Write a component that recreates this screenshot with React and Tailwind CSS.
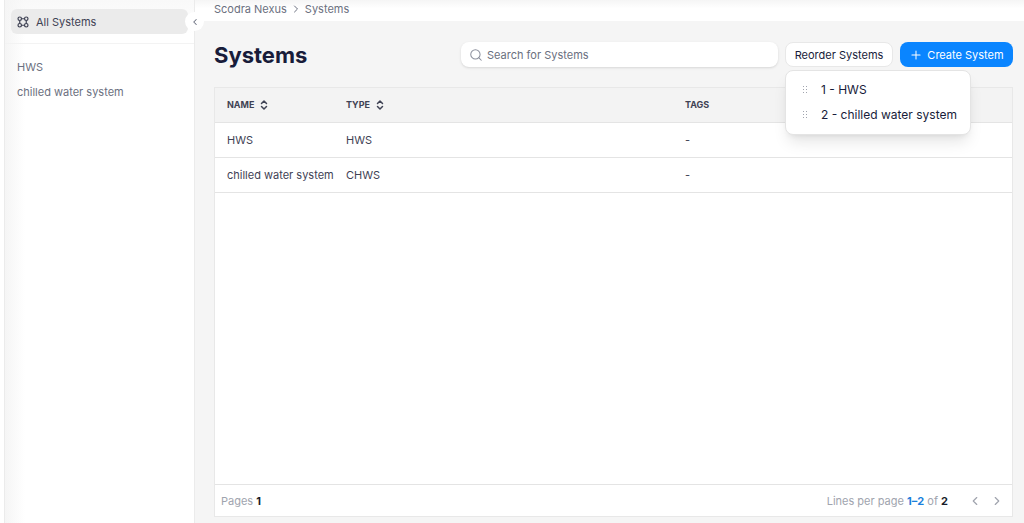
import { ChevronLeft, ChevronRight, ChevronsUpDown, Plus, Search } from "lucide-react";

const systems = [
  { name: "HWS", type: "HWS", tags: "-" },
  { name: "chilled water system", type: "CHWS", tags: "-" },
];

export default function App() {
  return (
    <div className="flex min-h-screen bg-white pl-1 font-['Inter',sans-serif] text-[11px] leading-4 text-[#3f4254]">
      <Sidebar />
      <main className="flex min-w-0 flex-1 flex-col bg-[#f5f5f5]">
        <Breadcrumb />
        <div className="flex flex-1 flex-col pt-[21px] pr-[11px] pb-1.5 pl-[19px]">
          <Toolbar />
          <SystemsTable />
        </div>
      </main>
    </div>
  );
}

function Sidebar() {
  return (
    <aside className="relative w-[191px] shrink-0 border-x border-[#ebebeb] bg-white">
      <div className="absolute inset-y-0 left-0 w-5 bg-gradient-to-r from-[#f5f5f5] to-white" />
      <div className="relative bg-gradient-to-b from-[#f5f5f5]/60 to-transparent pt-[9px] pr-[6px] pl-[6px]">
        <a
          href="#all"
          className="flex h-[25px] items-center gap-[7px] rounded-md bg-[#ebebeb] px-1.5 text-[#3f4254]"
        >
          <SystemsIcon />
          All Systems
        </a>
      </div>
      <nav className="relative mt-[9px] flex flex-col gap-[9px] border-t border-[#f3f3f3] px-3 pt-[15px] text-[#6b7080]">
        {systems.map((s) => (
          <a key={s.name} href="#system">
            {s.name}
          </a>
        ))}
      </nav>
      <button
        aria-label="Collapse sidebar"
        className="absolute top-3 -right-[10px] flex size-[19px] items-center justify-center rounded-full bg-white text-[#6b7080]"
      >
        <ChevronLeft className="size-2.5" strokeWidth={2.5} />
      </button>
    </aside>
  );
}

function SystemsIcon() {
  return (
    <svg
      className="size-3"
      viewBox="0 0 24 24"
      fill="none"
      stroke="currentColor"
      strokeWidth="2.4"
    >
      <circle cx="5.5" cy="5.5" r="3.5" />
      <circle cx="18.5" cy="5.5" r="3.5" />
      <circle cx="5.5" cy="18.5" r="3.5" />
      <circle cx="18.5" cy="18.5" r="3.5" />
      <path d="M9 5.5h6M5.5 9v6M18.5 9v6M9 18.5h6" />
    </svg>
  );
}

function Breadcrumb() {
  return (
    <nav
      aria-label="Breadcrumb"
      className="flex h-[21px] items-center gap-[3px] bg-white bg-gradient-to-b from-[#f5f5f5] to-white to-40% pb-[3px] pl-[19px] text-[#6b7080]"
    >
      <a href="#nexus">Scodra Nexus</a>
      <ChevronRight className="size-3" />
      <a href="#systems">Systems</a>
    </nav>
  );
}

function Toolbar() {
  return (
    <div className="flex h-[25px] items-center gap-[7px]">
      <h1 className="flex-1 text-[22px] leading-6 font-bold text-[#181c3a]">Systems</h1>
      <label className="flex h-[25px] w-[317px] items-center gap-1 rounded-lg bg-white px-2 shadow-sm">
        <Search className="size-[14px] shrink-0 text-[#8b8f9c]" strokeWidth={1.75} />
        <input
          type="search"
          aria-label="Search for Systems"
          placeholder="Search for Systems"
          className="min-w-0 flex-1 outline-none placeholder:text-[#6b7080]"
        />
      </label>
      <div className="relative">
        <button className="block h-[25px] w-[108px] rounded-lg border border-[#e8e8e8] bg-white whitespace-nowrap text-[#181c3a]">
          Reorder Systems
        </button>
        <ul className="absolute top-full left-0 mt-[3px] flex w-[186px] flex-col gap-[5px] rounded-lg border border-[#e4e4e4] bg-white px-[15px] py-[9px] text-[12px] leading-5 whitespace-nowrap text-[#181c3a] shadow-lg">
          {systems.map((s, i) => (
            <li key={s.name} className="flex items-center gap-3">
              <DragHandle />
              {i + 1} - {s.name}
            </li>
          ))}
        </ul>
      </div>
      <button className="flex h-[25px] w-[113px] items-center justify-center gap-1 rounded-lg bg-[#0a85ff] whitespace-nowrap text-white">
        <Plus className="size-[14px]" strokeWidth={1.75} />
        Create System
      </button>
    </div>
  );
}

function DragHandle() {
  return (
    <svg className="h-2 w-2 shrink-0" viewBox="0 0 8 8" fill="#a0a4ae">
      {[0, 3, 6].map((y) => (
        <g key={y}>
          <rect x="2" y={y} width="1" height="1" />
          <rect x="5" y={y} width="1" height="1" />
        </g>
      ))}
    </svg>
  );
}

function SystemsTable() {
  return (
    <section className="mt-5 flex flex-1 flex-col border border-[#e8e8e8] bg-white">
      <table className="w-full table-fixed text-left">
        <thead className="bg-[#f3f3f3] text-[9px] font-bold">
          <tr className="h-[34px] border-b border-[#e4e4e4]">
            <th className="w-[119px] pl-3">
              <SortButton label="NAME" />
            </th>
            <th className="pl-3">
              <SortButton label="TYPE" />
            </th>
            <th className="pl-3">TAGS</th>
          </tr>
        </thead>
        <tbody>
          {systems.map((s) => (
            <tr key={s.name} className="h-[35px] border-b border-[#e4e4e4]">
              <td className="pl-3 whitespace-nowrap">{s.name}</td>
              <td className="pl-3">{s.type}</td>
              <td className="pl-3">{s.tags}</td>
            </tr>
          ))}
        </tbody>
      </table>
      <footer className="mt-auto flex h-8 items-center justify-between border-t border-[#e4e4e4] pr-2 pl-1.5 text-[#a0a4ae]">
        <span>
          Pages <b className="text-[#181c2a]">1</b>
        </span>
        <div className="flex items-center gap-2">
          <span className="mr-3">
            Lines per page <b className="text-[#1b7fdc]">1–2</b> of{" "}
            <b className="text-[#181c2a]">2</b>
          </span>
          <button aria-label="Previous page">
            <ChevronLeft className="size-[14px]" />
          </button>
          <button aria-label="Next page">
            <ChevronRight className="size-[14px]" />
          </button>
        </div>
      </footer>
    </section>
  );
}

function SortButton({ label }) {
  return (
    <button className="flex items-center gap-1">
      {label}
      <ChevronsUpDown className="size-3" strokeWidth={3} />
    </button>
  );
}
